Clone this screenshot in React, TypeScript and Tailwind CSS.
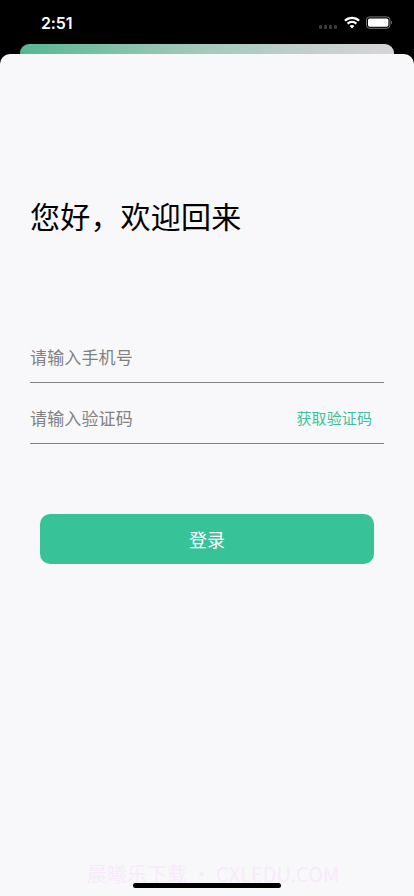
import React from 'react';

function StatusBar() {
  return (
    <div className="flex h-[44px] items-start justify-between pl-[41px] pr-[21px] text-white">
      <span className="mt-[13px] font-['Inter'] text-[16px] font-semibold leading-[20px] tracking-[-0.1px]">2:51</span>
      <div className="mt-[16px] flex items-start">
        {/* No cellular signal */}
        <div className="mr-[7px] mt-[9px] flex gap-[2px]">
          <span className="h-[4px] w-[3px] rounded-[1px] bg-[#3b3b3b]" />
          <span className="h-[4px] w-[3px] rounded-[1px] bg-[#3b3b3b]" />
          <span className="h-[4px] w-[3px] rounded-[1px] bg-[#3b3b3b]" />
          <span className="h-[4px] w-[3px] rounded-[1px] bg-[#3b3b3b]" />
        </div>
        <svg width="16" height="13" viewBox="0 0 16 13" className="mr-[6px]" fill="none" stroke="white" strokeWidth="2.2">
          <path d="M0.9 4.7C4.9 0.8 11.1 0.8 15.1 4.7" />
          <path d="M3.6 7.6C6.1 5.2 9.9 5.2 12.4 7.6" />
          <path d="M8 12.4L5.6 9.9C7 8.7 9 8.7 10.4 9.9Z" fill="white" stroke="none" />
        </svg>
        <svg width="27" height="13" viewBox="0 0 27 13">
          <rect x="0.5" y="0.9" width="23.4" height="11.4" rx="3" fill="none" stroke="#777" />
          <rect x="2" y="2.4" width="20.4" height="8.4" rx="1.7" fill="white" />
          <path d="M25 4.8C26.4 5.4 26.4 7.8 25 8.4Z" fill="#777" />
        </svg>
      </div>
    </div>
  );
}

export default function App() {
  return (
    <div className="flex h-[896px] w-[414px] flex-col overflow-hidden bg-black font-['Noto_Sans_CJK_SC',sans-serif]">
      <StatusBar />

      {/* Previous page, peeking out behind the sheet */}
      <div className="mx-[20px] h-[10px] shrink-0 rounded-t-[9px] bg-gradient-to-r from-[#55b794] via-[#a5c9bc] to-[#d8d5d7]" />

      <main className="relative flex flex-1 flex-col rounded-t-[10px] bg-[#f8f8fb] px-[30px]">
        <h1 className="mt-[139px] text-[30px] font-normal leading-[44px] tracking-[0.2px] text-black">您好，欢迎回来</h1>

        <form className="mt-[95px] flex flex-col">
          <div className="flex h-[51px] items-center border-b border-[#818184]">
            <span className="text-[17px] leading-[24px] tracking-[0.15px] text-[#818184]">请输入手机号</span>
          </div>
          <div className="mt-[10px] flex h-[51px] items-center justify-between border-b border-[#818184] pr-[12px]">
            <span className="text-[17px] leading-[24px] tracking-[0.15px] text-[#818184]">请输入验证码</span>
            <button type="button" className="text-[15px] leading-[22px] tracking-[0.1px] text-[#3ac49b]">获取验证码</button>
          </div>
          <button type="button" className="mx-[10px] mt-[70px] h-[50px] rounded-[10px] bg-[#38c298] text-[18px] leading-[26px] text-white">
            登录
          </button>
        </form>

        <div className="absolute left-[87px] top-[806px] whitespace-nowrap text-[20px] leading-[28px] text-[#f8eafa]">
          晨曦乐下载 • CXLEDU.COM
        </div>
        <div className="absolute bottom-[8px] left-[133px] h-[5px] w-[148px] rounded-full bg-black" />
      </main>
    </div>
  );
}
